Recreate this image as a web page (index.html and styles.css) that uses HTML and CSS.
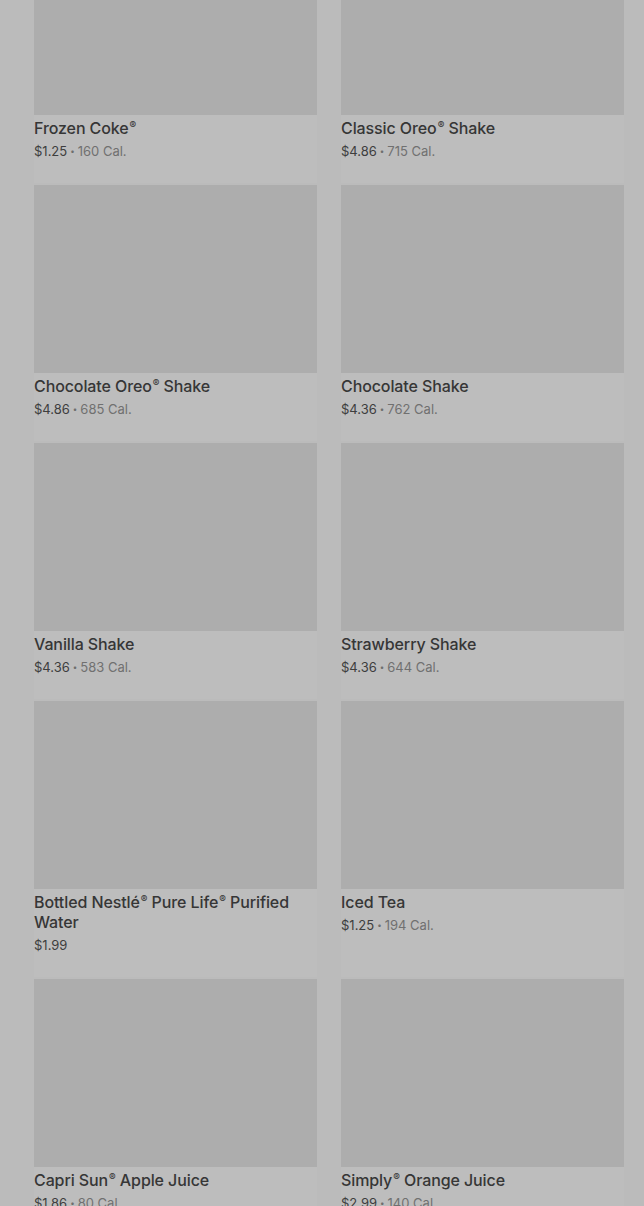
FILE: index.html
```html
<!DOCTYPE html>
<html lang="en">
<head>
<meta charset="utf-8">
<link rel="stylesheet" href="styles.css">
</head>
<body>
<div class="grid">
  <div class="card"><div class="img"></div><div class="title">Frozen Coke<span class="reg">®</span></div><div class="meta"><span class="price">$1.25</span><span class="dot">•</span><span class="cal">160 Cal.</span></div></div>
  <div class="card"><div class="img"></div><div class="title">Classic Oreo<span class="reg">®</span> Shake</div><div class="meta"><span class="price">$4.86</span><span class="dot">•</span><span class="cal">715 Cal.</span></div></div>
  <div class="card"><div class="img"></div><div class="title">Chocolate Oreo<span class="reg">®</span> Shake</div><div class="meta"><span class="price">$4.86</span><span class="dot">•</span><span class="cal">685 Cal.</span></div></div>
  <div class="card"><div class="img"></div><div class="title">Chocolate Shake</div><div class="meta"><span class="price">$4.36</span><span class="dot">•</span><span class="cal">762 Cal.</span></div></div>
  <div class="card"><div class="img"></div><div class="title">Vanilla Shake</div><div class="meta"><span class="price">$4.36</span><span class="dot">•</span><span class="cal">583 Cal.</span></div></div>
  <div class="card"><div class="img"></div><div class="title">Strawberry Shake</div><div class="meta"><span class="price">$4.36</span><span class="dot">•</span><span class="cal">644 Cal.</span></div></div>
  <div class="card"><div class="img"></div><div class="title">Bottled Nestlé<span class="reg">®</span> Pure Life<span class="reg">®</span> Purified Water</div><div class="meta"><span class="price">$1.99</span></div></div>
  <div class="card"><div class="img"></div><div class="title">Iced Tea</div><div class="meta"><span class="price">$1.25</span><span class="dot">•</span><span class="cal">194 Cal.</span></div></div>
  <div class="card"><div class="img"></div><div class="title">Capri Sun<span class="reg">®</span> Apple Juice</div><div class="meta"><span class="price">$1.86</span><span class="dot">•</span><span class="cal">80 Cal.</span></div></div>
  <div class="card"><div class="img"></div><div class="title">Simply<span class="reg">®</span> Orange Juice</div><div class="meta"><span class="price">$2.99</span><span class="dot">•</span><span class="cal">140 Cal.</span></div></div>
</div>
</body>
</html>
```
FILE: styles.css
```css
html, body {
  margin: 0;
  padding: 0;
  background: #bbbbbb;
  overflow: hidden;
}
body {
  font-family: Inter, "Noto Sans", sans-serif;
  color: #3a3a3a;
}
.grid {
  display: grid;
  grid-template-columns: 283px 283px;
  column-gap: 24px;
  row-gap: 2px;
  padding: 0 20px 0 34px;
  margin-top: -73px;
}
.card {
  background: #bdbdbd;
  padding-bottom: 22px;
}
.img {
  height: 188px;
  background: #adadad;
}
.title {
  margin-top: 3px;
  font-size: 16px;
  font-weight: 500;
  line-height: 20px;
  letter-spacing: -0.1px;
  color: #363636;
}
.reg {
  font-size: 10px;
  line-height: 0;
  vertical-align: 5px;
  margin-left: 1px;
}
.meta {
  margin-top: 3px;
  display: flex;
  align-items: center;
  height: 20px;
  font-size: 13px;
  line-height: 20px;
  color: #3e3e3e;
}
.dot {
  font-size: 8px;
  color: #6e6e6e;
  margin: 0 3px;
}
.cal {
  color: #707070;
}
```
